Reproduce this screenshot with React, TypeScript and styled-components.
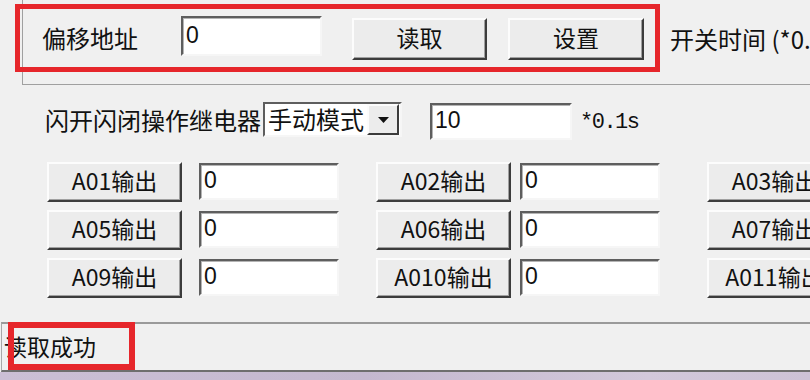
import styled, { createGlobalStyle } from "styled-components";

const GlobalStyle = createGlobalStyle`
  html, body {
    margin: 0;
    padding: 0;
    background: #f0f0f0;
  }
  body {
    font-family: "Noto Sans CJK SC", sans-serif;
    color: #111;
  }
`;

const Window = styled.div`
  position: relative;
  width: 810px;
  height: 380px;
  overflow: hidden;
  background: #f0f0f0;
  display: flex;
  flex-direction: column;
`;

const GroupBox = styled.div`
  box-sizing: border-box;
  height: 85px;
  margin-left: 22px;
  padding: 16px 0 0 19px;
  border-left: 1px solid #a0a0a0;
  border-bottom: 1px solid #a0a0a0;
  display: flex;
  align-items: flex-start;
  flex-shrink: 0;
`;

const Label = styled.span<{ $top?: number; $left?: number; $width?: number }>`
  flex-shrink: 0;
  font-size: 24px;
  line-height: 38px;
  white-space: nowrap;
  margin-top: ${(p) => p.$top ?? 0}px;
  margin-left: ${(p) => p.$left ?? 0}px;
  width: ${(p) => (p.$width ? `${p.$width}px` : "auto")};
`;

const Unit = styled.span`
  flex-shrink: 0;
  margin: 2px 0 0 8px;
  font-family: "Liberation Mono", monospace;
  font-size: 22px;
  letter-spacing: -1.5px;
  line-height: 38px;
  white-space: nowrap;
`;

const TextBox = styled.input<{ $w: number; $h: number; $top?: number; $left?: number }>`
  box-sizing: border-box;
  flex-shrink: 0;
  width: ${(p) => p.$w}px;
  height: ${(p) => p.$h}px;
  margin: ${(p) => p.$top ?? 0}px 0 0 ${(p) => p.$left ?? 0}px;
  padding: 0 3px 2px;
  border: 2px solid;
  border-color: #5e5e5e #f6f6f6 #f6f6f6 #5e5e5e;
  box-shadow: inset 1px 1px 0 #b4b4b4;
  background: #fff;
  color: #111;
  font-family: "Liberation Sans", sans-serif;
  font-size: 23px;
  outline: none;
`;

const PushButton = styled.button<{ $w: number; $h: number; $top?: number; $left?: number }>`
  box-sizing: border-box;
  flex-shrink: 0;
  width: ${(p) => p.$w}px;
  height: ${(p) => p.$h}px;
  margin: ${(p) => p.$top ?? 0}px 0 0 ${(p) => p.$left ?? 0}px;
  padding: 0 0 3px;
  border: 2px solid;
  border-color: #fcfcfc #3c3c3c #3c3c3c #fcfcfc;
  box-shadow: inset -1px -1px 0 #a0a0a0;
  background: #ececec;
  color: #111;
  font-family: "Noto Sans CJK SC", sans-serif;
  font-size: 23px;
  line-height: 1;
  white-space: nowrap;
`;

const ControlRow = styled.div`
  display: flex;
  align-items: flex-start;
  height: 38px;
  margin-top: 17px;
  padding-left: 45px;
  flex-shrink: 0;
`;

const ComboBox = styled.div`
  box-sizing: border-box;
  flex-shrink: 0;
  width: 139px;
  height: 35px;
  display: flex;
  align-items: center;
  background: #fff;
  border: 2px solid;
  border-color: #5e5e5e #f6f6f6 #f6f6f6 #5e5e5e;
`;

const ComboText = styled.span`
  flex: 1;
  padding: 0 0 2px 3px;
  font-size: 24px;
  line-height: 1;
  white-space: nowrap;
`;

const DropButton = styled.span`
  box-sizing: border-box;
  width: 32px;
  height: 31px;
  margin-right: 1px;
  display: flex;
  align-items: center;
  justify-content: center;
  border: 2px solid;
  border-color: #fcfcfc #3c3c3c #3c3c3c #fcfcfc;
  background: #ececec;
`;

const OutputGrid = styled.div`
  display: grid;
  grid-template-columns: 152px 177px 144px 187px 140px;
  grid-auto-rows: 40px;
  row-gap: 8px;
  align-items: start;
  margin-top: 22px;
  padding-left: 47px;
  flex-shrink: 0;
`;

const StatusBar = styled.div`
  box-sizing: border-box;
  height: 50px;
  margin: 24px 0 0 1px;
  padding: 0 0 3px 2px;
  display: flex;
  align-items: center;
  border-top: 2px solid #9a9a9a;
  border-left: 1px solid #a8a8a8;
  border-bottom: 2px solid #6e6e6e;
  font-size: 23px;
  flex-shrink: 0;
`;

const TaskStrip = styled.div`
  height: 8px;
  flex-shrink: 0;
  background: linear-gradient(90deg, #cbbfd5, #c4b8cf 45%, #d2c8da 80%, #cdc2d6);
`;

const Annotation = styled.div<{ $x: number; $y: number; $w: number; $h: number; $t: number }>`
  position: absolute;
  left: ${(p) => p.$x}px;
  top: ${(p) => p.$y}px;
  width: ${(p) => p.$w}px;
  height: ${(p) => p.$h}px;
  box-sizing: border-box;
  border: ${(p) => p.$t}px solid #e6262b;
  pointer-events: none;
`;

const outputs = [
  ["A01", "A02", "A03"],
  ["A05", "A06", "A07"],
  ["A09", "A010", "A011"],
];

export default function App() {
  return (
    <Window>
      <GlobalStyle />

      <GroupBox>
        <Label $top={3} $width={139}>偏移地址</Label>
        <TextBox $w={141} $h={40} defaultValue="0" />
        <PushButton $w={135} $h={42} $top={2} $left={30}>读取</PushButton>
        <PushButton $w={136} $h={42} $top={2} $left={21}>设置</PushButton>
        <Label $top={4} $left={26}>开关时间 (*0.1s)</Label>
      </GroupBox>

      <ControlRow>
        <Label $top={-1} $width={218}>闪开闪闭操作继电器</Label>
        <ComboBox>
          <ComboText>手动模式</ComboText>
          <DropButton>
            <svg width="11" height="6" viewBox="0 0 11 6">
              <polygon points="0,0 11,0 5.5,6" fill="#111" />
            </svg>
          </DropButton>
        </ComboBox>
        <TextBox $w={142} $h={37} $top={1} $left={28} defaultValue="10" />
        <Unit>*0.1s</Unit>
      </ControlRow>

      <OutputGrid>
        {outputs.map((row) =>
          row.map((name, i) => [
            <PushButton key={name} $w={135} $h={40}>
              {name}输出
            </PushButton>,
            i < 2 ? <TextBox key={name + "v"} $w={140} $h={37} $top={1} defaultValue="0" /> : null,
          ])
        )}
      </OutputGrid>

      <StatusBar>读取成功</StatusBar>
      <TaskStrip />

      <Annotation $x={15} $y={4} $w={645} $h={68} $t={5} />
      <Annotation $x={8} $y={322} $w={127} $h={48} $t={6} />
    </Window>
  );
}
